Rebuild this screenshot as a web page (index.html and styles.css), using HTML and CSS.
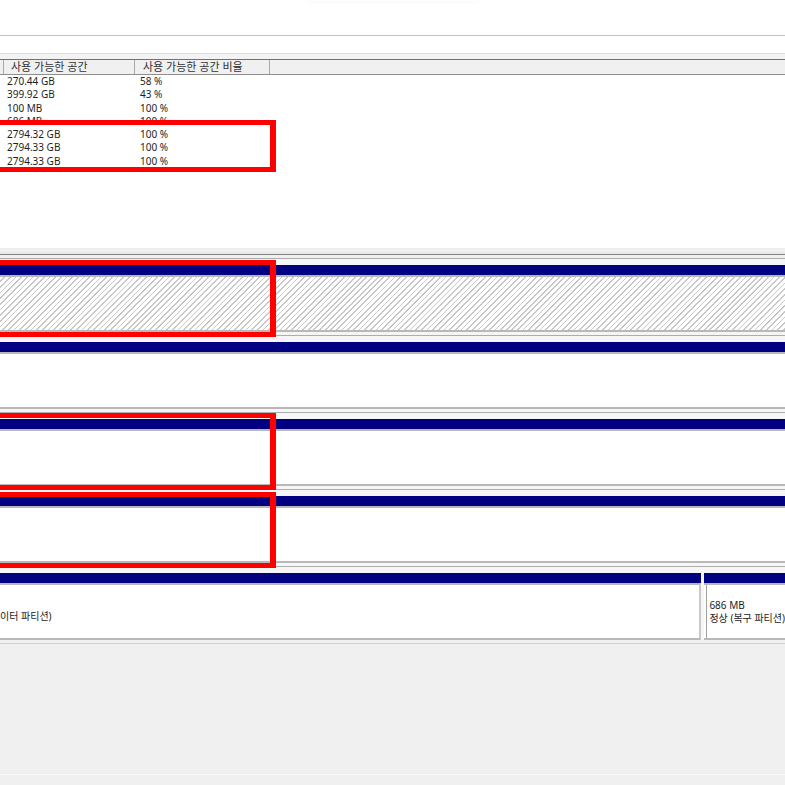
FILE: index.html
```html
<!DOCTYPE html>
<html>
<head>
    <title>디스크 관리</title>
    <link rel="stylesheet" href="styles.css">
</head>
<body>
    <div class="top"></div>
    <div class="toolbar"></div>

    <div class="list">
        <div class="list-gap"></div>
        <div class="header">
            <div class="hcell stub"></div>
            <div class="hcell c1">사용 가능한 공간</div>
            <div class="hcell c2">사용 가능한 공간 비율</div>
            <div class="hcell fill"></div>
        </div>
        <div class="rows">
            <div class="row"><span>270.44 GB</span><span>58 %</span></div>
            <div class="row"><span>399.92 GB</span><span>43 %</span></div>
            <div class="row"><span>100 MB</span><span>100 %</span></div>
            <div class="row"><span>686 MB</span><span>100 %</span></div>
            <div class="row"><span>2794.32 GB</span><span>100 %</span></div>
            <div class="row"><span>2794.33 GB</span><span>100 %</span></div>
            <div class="row"><span>2794.33 GB</span><span>100 %</span></div>
        </div>
    </div>

    <div class="splitter"></div>

    <div class="disks">
        <div class="disk">
            <div class="part">
                <div class="body hatch"></div>
            </div>
        </div>
        <div class="disk">
            <div class="part">
                <div class="body"></div>
            </div>
        </div>
        <div class="disk">
            <div class="part">
                <div class="body"></div>
            </div>
        </div>
        <div class="disk">
            <div class="part">
                <div class="body"></div>
            </div>
        </div>
        <div class="disk split">
            <div class="part wide">
                <div class="body text-body">
                    <div class="label cut">이터 파티션)</div>
                </div>
            </div>
            <div class="part narrow">
                <div class="body text-body">
                    <div class="inner">
                        <div class="label">686 MB</div>
                        <div class="label">정상 (복구 파티션)</div>
                    </div>
                </div>
            </div>
        </div>
    </div>

    <div class="rest"></div>
    <div class="status"></div>

    <!-- popup shadow and red highlight boxes lie over the content -->
    <div class="popup-shadow"></div>
    <div class="mark" style="top:120px;height:52px"></div>
    <div class="mark" style="top:260px;height:77px"></div>
    <div class="mark" style="top:413px;height:77px"></div>
    <div class="mark" style="top:492px;height:76px"></div>
</body>
</html>
```

FILE: styles.css
```css
body {
    margin: 0;
    background: #f0f0f0;
    font-family: "Noto Sans", "Noto Sans CJK KR", sans-serif;
    color: #222;
    overflow: hidden;
    position: relative;
    height: 785px;
}
.top {
    height: 35px;
    background: #fff;
    border-bottom: 1px solid #bfbfc6;
}
.toolbar {
    height: 17px;
    background: #fff;
}
.list {
    border-top: 1px solid #dcdcdc;
}
.list-gap {
    height: 5px;
    background: #f3f3f3;
}
.header {
    display: flex;
    height: 14px;
    background: #f0f0f0;
    border-top: 1px solid #707070;
    border-bottom: 1px solid #8e8e8e;
    font-size: 11px;
    line-height: 14px;
    color: #333;
}
.hcell {
    border-right: 1px solid #a8a8a8;
    box-sizing: border-box;
    white-space: nowrap;
}
.stub {
    width: 4px;
}
.c1 {
    width: 131px;
    padding-left: 7px;
}
.c2 {
    width: 135px;
    padding-left: 8px;
}
.fill {
    flex: 1;
    border-right: none;
}
.rows {
    height: 173px;
    background: #fff;
    padding-left: 7px;
}
.row {
    display: grid;
    grid-template-columns: 133px 1fr;
    height: 13.3px;
    line-height: 13.3px;
    font-size: 10px;
    color: #1e1e1e;
}
.splitter {
    height: 6px;
    background: linear-gradient(#ececec, #f2f2f2 40%, #e4e4e4);
    border-bottom: 1px solid #858585;
}
.disks {
    background: #f6f6f6;
}
.disk {
    margin-top: 3px;
    border-top: 1px solid #adadad;
    padding-top: 6px;
    display: flex;
    gap: 3px;
}
.part {
    flex: 1;
    border-top: 10px solid #000080;
}
.body {
    height: 53px;
    background: #fff;
    border-top: 2px solid #b8b8b8;
    border-bottom: 2px solid #b8b8b8;
}
.hatch {
    background: repeating-linear-gradient(135deg, #fff 0 2.8px, #c8c8c8 2.8px 4px);
}
.split .wide .body {
    border-right: 2px solid #c8c8c8;
}
.narrow {
    flex: 0 0 78px;
}
.text-body {
    display: flex;
    align-items: center;
    font-size: 10px;
    line-height: 12.5px;
    color: #222;
    white-space: nowrap;
    overflow: hidden;
}
.narrow .text-body {
    padding-left: 2px;
}
.inner {
    border-left: 1px solid #a0a0a0;
    height: 100%;
    display: flex;
    flex-direction: column;
    justify-content: center;
    padding-left: 2px;
    box-sizing: border-box;
}
.cut {
    padding-top: 10px;
}
.rest {
    height: 130px;
    border-top: 1px solid #d0d0d0;
    margin-top: 3px;
    background: #f0f0f0;
}
.status {
    border-top: 1px solid #fbfbfb;
    height: 14px;
}
.popup-shadow {
    position: absolute;
    top: -9px;
    left: 305px;
    width: 175px;
    height: 10px;
    border-radius: 6px;
    background: #fff;
    box-shadow: 0 1px 4px rgba(0, 0, 0, 0.04);
}
.mark {
    position: absolute;
    left: -10px;
    width: 286px;
    box-sizing: border-box;
    border: 5px solid #ff0000;
    border-right-width: 6px;
}
```
